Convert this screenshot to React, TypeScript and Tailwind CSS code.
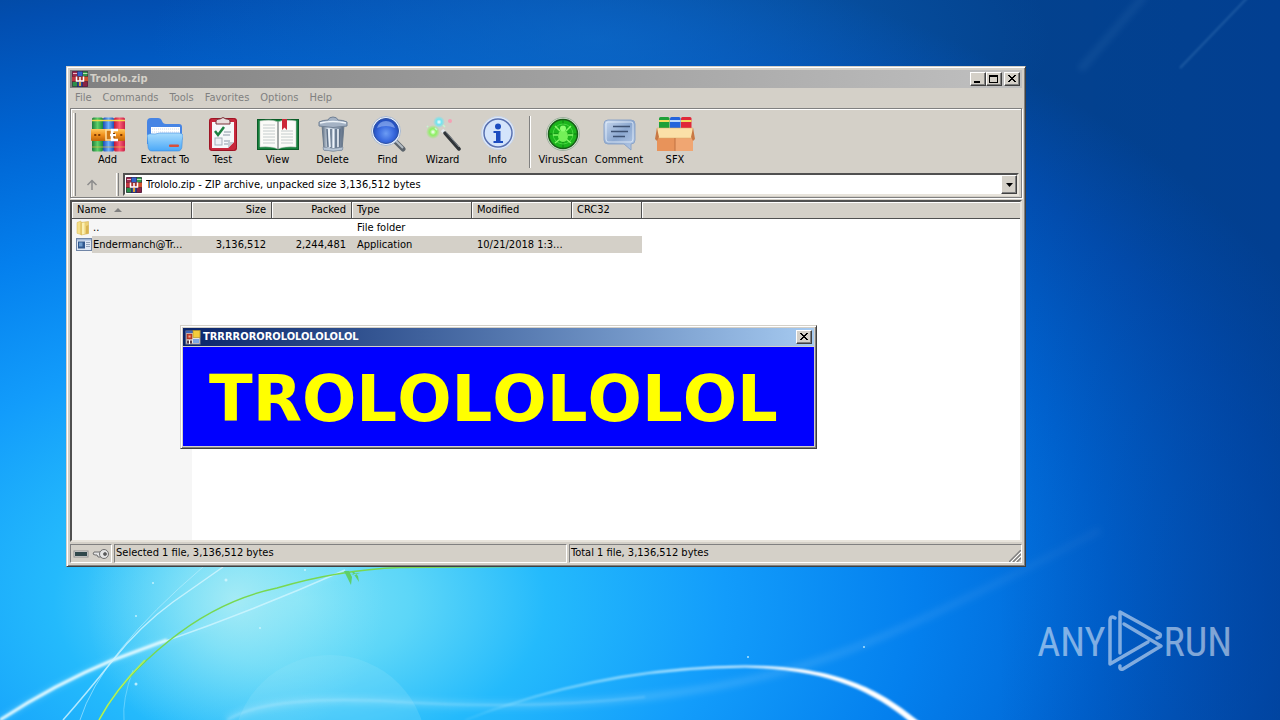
import React, { useState } from "react";

type IconProps = { className?: string };

// ---------- small icons ----------

function RarIcon({ className }: IconProps) {
  return (
    <svg viewBox="0 0 16 16" className={className} aria-hidden="true">
      <rect x="0" y="0" width="16" height="16" rx="1" fill="#3a1d3c" />
      <rect x="0.5" y="0.5" width="4.5" height="5" fill="#a02a4c" />
      <rect x="1" y="2" width="4" height="1" fill="#e9b9c6" />
      <rect x="5.5" y="0.5" width="5" height="5" fill="#2f62c8" />
      <rect x="11" y="0.5" width="4.5" height="5" fill="#2f9a4a" />
      <rect x="11" y="2" width="4.5" height="1" fill="#b8e0b0" />
      <rect x="0" y="5.5" width="16" height="5" fill="#a5322c" />
      <rect x="0" y="6" width="4" height="4" fill="#c03540" />
      <rect x="12" y="6" width="4" height="4" fill="#d0522c" />
      <rect x="0.5" y="11" width="4.5" height="4.5" fill="#2d8e4b" />
      <rect x="5.5" y="11" width="5" height="4.5" fill="#27479c" />
      <rect x="11" y="11" width="4.5" height="4.5" fill="#8a2444" />
      <path d="M4.5 5.5v4.500h7V5.500M8 6v4" fill="none" stroke="#fff" strokeWidth="1.500" />
      <rect x="7" y="11" width="2" height="4" fill="#e0a030" />
    </svg>
  );
}

function FormIcon({ className }: IconProps) {
  return (
    <svg viewBox="0 0 16 16" className={className} aria-hidden="true">
      <rect x="1" y="2" width="14" height="13" fill="#e8e4dc" stroke="#8a8a98" />
      <rect x="1" y="2" width="7" height="2" fill="#3c64b8" />
      <rect x="2" y="5" width="5" height="5" fill="#c8402c" stroke="#8c2418" strokeWidth="0.6" />
      <rect x="3.5" y="6.5" width="2" height="2" fill="#f0a890" />
      <rect x="8" y="1.5" width="7" height="7" fill="#f4cc3c" stroke="#b08a18" strokeWidth="0.6" />
      <rect x="2" y="11.5" width="5" height="3" fill="#5a3c48" />
      <rect x="4" y="11" width="1" height="4" fill="#fff" />
      <rect x="8" y="10" width="6" height="4" fill="#7ea6e4" />
    </svg>
  );
}

function FolderIcon({ className }: IconProps) {
  return (
    <svg viewBox="0 0 16 16" className={className} aria-hidden="true">
      <path d="M1 2.500 5 1v13.500l-4-1.200z" fill="#f6e08a" stroke="#d8b850" strokeWidth="0.5" />
      <path d="M5 2.500 12.500 1.500v12L5 15z" fill="#ecd076" stroke="#cfa844" strokeWidth="0.5" />
      <path d="M6 3v11.500L8.500 14V2.600z" fill="#fbf0b4" />
      <path d="m10 6 2.500-1v8.500L10 14z" fill="#d8b352" />
    </svg>
  );
}

function ExeIcon({ className }: IconProps) {
  return (
    <svg viewBox="0 0 16 16" className={className} aria-hidden="true">
      <rect x="0.5" y="1.5" width="15" height="12" fill="#dfe8f4" stroke="#7085a6" />
      <rect x="1" y="2" width="14" height="1.5" fill="#9fb6d8" />
      <rect x="2" y="4.5" width="7" height="7" fill="#31588e" />
      <rect x="3" y="5.5" width="3.5" height="4" fill="#6f9ccc" />
      <path d="M10 5.500h4M10 7.500h4M10 9.500h4" stroke="#93a2b8" />
    </svg>
  );
}

// ---------- toolbar icons ----------

function AddIcon() {
  return (
    <svg viewBox="0 0 36 36" className="size-9" aria-hidden="true">
      <defs>
        <linearGradient id="bkG"><stop stopColor="#1c7c3c" /><stop offset=".5" stopColor="#5fd068" /><stop offset="1" stopColor="#168a40" /></linearGradient>
        <linearGradient id="bkB"><stop stopColor="#1c4cb4" /><stop offset=".5" stopColor="#6cb0fa" /><stop offset="1" stopColor="#1f50b8" /></linearGradient>
        <linearGradient id="bkR"><stop stopColor="#c01838" /><stop offset=".5" stopColor="#fa5c74" /><stop offset="1" stopColor="#c82048" /></linearGradient>
        <linearGradient id="belt" x2="0" y2="1"><stop stopColor="#ffc85c" /><stop offset=".5" stopColor="#f0901c" /><stop offset="1" stopColor="#c06408" /></linearGradient>
      </defs>
      <rect x="2" y="1.500" width="11" height="34" rx="1.500" fill="url(#bkG)" />
      <rect x="13" y="1.500" width="11" height="34" rx="1.500" fill="url(#bkB)" />
      <rect x="24" y="1.500" width="11" height="34" rx="1.500" fill="url(#bkR)" />
      <path d="M2 4.500h33" stroke="#f6d84c" strokeWidth="1.500" />
      <path d="M2 31h33" stroke="#e8b83c" opacity=".7" />
      <rect x="1" y="13" width="34" height="12" rx="1" fill="url(#belt)" />
      <path d="M5 19h.5M9 19h.5M31 19h.5" stroke="#7c3a04" strokeWidth="2" strokeLinecap="round" />
      <rect x="16" y="14" width="7" height="10" fill="#d07814" stroke="#ffe0a0" strokeWidth="1.500" />
      <path d="M28 14h-6v10h6M20 19h6" fill="none" stroke="#fff" strokeWidth="2.500" />
      <path d="M24 17v1M24 20.500v1" stroke="#70380c" strokeWidth="2" />
    </svg>
  );
}

function ExtractIcon() {
  return (
    <svg viewBox="0 0 36 36" className="size-9" aria-hidden="true">
      <defs>
        <linearGradient id="fd" x2="0" y2="1"><stop stopColor="#a9dcfc" /><stop offset="1" stopColor="#4aa8f8" /></linearGradient>
      </defs>
      <path d="M0 6q0-4 4-4h7q3 0 4 3 1 3 4 3h13q3 0 3 3v17H0z" fill="#4684e4" />
      <rect x="4" y="11" width="29" height="12" fill="#fff" />
      <path d="M5 13h27M5 16h27" stroke="#ccdaf0" strokeDasharray="1 1" />
      <path d="M0 19q2-2 8-1l5-1h18q5 0 5 3-1 4-1 9 0 6-4 6H5q-4 0-4-5z" fill="url(#fd)" stroke="#3d8ce0" strokeWidth=".6" />
      <rect x="22" y="28.500" width="10" height="2.500" rx="1" fill="#d8503c" />
    </svg>
  );
}

function TestIcon() {
  return (
    <svg viewBox="0 0 36 36" className="size-9" aria-hidden="true">
      <rect x="4" y="2" width="28" height="33" rx="3" fill="#c8283c" />
      <rect x="4.500" y="2.500" width="27" height="32" rx="3" fill="none" stroke="#9c1424" />
      <path d="M7 6h22v20l-6 6H7z" fill="#f6f8fa" />
      <path d="M23 32v-6h6z" fill="#c4ccd4" />
      <path d="M11 8V5q0-2 3-2h1q3-3 6 0h1q3 0 3 2v3z" fill="#e8dcdc" stroke="#7a3038" />
      <path d="m10 15 3 4 6-8" fill="none" stroke="#1c8040" strokeWidth="2.500" />
      <path d="M19 16h7M18 19h7M19 25h6M19 28h4" stroke="#8c98a8" />
      <rect x="10" y="22" width="7" height="7" fill="#eef0f4" stroke="#a8b0bc" />
    </svg>
  );
}

function ViewIcon() {
  return (
    <svg viewBox="0 0 44 36" className="h-9 w-11" aria-hidden="true">
      <rect x="1" y="3" width="42" height="31" rx="1" fill="#16803c" />
      <rect x="1.500" y="3.500" width="41" height="30" fill="none" stroke="#0b5c28" />
      <path d="M4 5q12-2 18 1 6-3 18-1v26q-12-1-18 2-6-3-18-2z" fill="#fbfbf8" stroke="#c8ccc8" strokeWidth=".6" />
      <path d="M22 6v27" stroke="#8a9090" strokeWidth="1.500" />
      <path d="M7 9h12M7 12h12M7 15h12M7 18h12M7 21h12M7 24h12M7 27h12M25 15h12M25 18h12M25 21h12M25 24h12M25 27h12" stroke="#c4cccc" />
      <path d="M26 3h5v11l-2.500-2.500L26 14z" fill="#cc2838" />
    </svg>
  );
}

function DeleteIcon() {
  return (
    <svg viewBox="0 0 36 36" className="size-9" aria-hidden="true">
      <defs>
        <linearGradient id="can"><stop stopColor="#5c6c80" /><stop offset=".3" stopColor="#dfe8f2" /><stop offset=".6" stopColor="#9cacbe" /><stop offset="1" stopColor="#5a6a80" /></linearGradient>
      </defs>
      <path d="m7 9 2 25q9 2 18 0l2-25z" fill="url(#can)" stroke="#6a7a8c" />
      <path d="m12 13 1 18M16 13v19M21 13v19M25 13l-1 18" stroke="#5f7188" strokeWidth="1.500" />
      <path d="m14 13 1 18M18.500 13v19M23 13v18" stroke="#eef4fa" strokeWidth="1.500" />
      <path d="M4 10V6q4-2 9-2 1-3 5-3t5 3q5 0 9 2v4q-14 3-28 0z" fill="#a4b2c4" stroke="#708094" />
      <path d="M5 7q13-3 26 0" fill="none" stroke="#eff5fa" strokeWidth="1.500" />
      <path d="M8 31q10 3 20 0l-.5 3q-9 2-19 0z" fill="#b8c6d6" stroke="#708094" strokeWidth=".5" />
    </svg>
  );
}

function FindIcon() {
  return (
    <svg viewBox="0 0 36 36" className="size-9" aria-hidden="true">
      <defs>
        <radialGradient id="lens" cy=".6"><stop stopColor="#6c9cf4" /><stop offset=".6" stopColor="#3c6ce0" /><stop offset="1" stopColor="#2450c0" /></radialGradient>
      </defs>
      <path d="m25 25 8 8" stroke="#5c646c" strokeWidth="5" strokeLinecap="round" />
      <path d="m25 24 8 8" stroke="#b4bcc4" strokeWidth="2" />
      <circle cx="16" cy="15" r="14.500" fill="#e8f0fc" stroke="#a8b8d0" />
      <circle cx="16" cy="15" r="12.500" fill="url(#lens)" stroke="#2c50a4" />
      <path d="M7 12q2-7 9-7t9 7q-9-4-18 0z" fill="#8cacf0" opacity=".7" />
    </svg>
  );
}

function WizardIcon() {
  return (
    <svg viewBox="0 0 36 36" className="size-9" aria-hidden="true">
      <defs>
        <radialGradient id="glG"><stop stopColor="#fff" /><stop offset=".45" stopColor="#8cf060" /><stop offset="1" stopColor="#8cf060" stopOpacity="0" /></radialGradient>
        <radialGradient id="glC"><stop stopColor="#fff" /><stop offset=".45" stopColor="#70e4f0" /><stop offset="1" stopColor="#70e4f0" stopOpacity="0" /></radialGradient>
      </defs>
      <circle cx="8" cy="16" r="7" fill="url(#glG)" />
      <circle cx="14" cy="6" r="6" fill="url(#glC)" />
      <circle cx="25" cy="5" r="2" fill="#f4a0b4" />
      <path d="M10 12l2 2M18 9l2 2M2 10l1 1" stroke="#c4f8d0" strokeWidth="1.500" />
      <path d="m17 14 4 4" stroke="#e4e8ec" strokeWidth="3.500" />
      <path d="m20 17 14 16" stroke="#303438" strokeWidth="3.500" strokeLinecap="round" />
      <path d="m21 16 13 15" stroke="#808890" />
    </svg>
  );
}

function InfoIcon() {
  return (
    <svg viewBox="0 0 36 36" className="size-9" aria-hidden="true">
      <circle cx="18" cy="17" r="16.500" fill="#dfeafa" stroke="#c8d4e8" />
      <circle cx="18" cy="17" r="14" fill="#d4e4fb" stroke="#5870b0" strokeWidth="1.500" />
      <circle cx="18" cy="10.500" r="3" fill="#1c4cc0" />
      <path d="M13.500 15h7v10h2.500v2h-9.500v-2H16v-8h-2.500z" fill="#1c4cc0" />
    </svg>
  );
}

function VirusIcon() {
  return (
    <svg viewBox="0 0 36 36" className="size-9" aria-hidden="true">
      <circle cx="18" cy="18" r="16.500" fill="#d4e4d0" stroke="#a0b0a0" />
      <circle cx="18" cy="18" r="14.500" fill="#1cb41c" stroke="#185c18" strokeWidth="1.500" />
      <path d="M18 4v28M4 18h28" stroke="#0f8010" />
      <circle cx="18" cy="18" r="10" fill="none" stroke="#48d840" />
      <path d="m10 10 5 5M26 10l-5 5M8 19h5M28 19h-5M10 27l5-4M26 27l-5-4" stroke="#84f868" strokeWidth="1.500" />
      <ellipse cx="18" cy="20" rx="5" ry="6" fill="#74f058" />
      <circle cx="18" cy="12.500" r="3" fill="#8cfc70" />
    </svg>
  );
}

function CommentIcon() {
  return (
    <svg viewBox="0 0 36 36" className="size-9" aria-hidden="true">
      <defs>
        <linearGradient id="cm" x2="1" y2="1"><stop stopColor="#c8d8ee" /><stop offset=".5" stopColor="#8ca8d0" /><stop offset="1" stopColor="#b8cce8" /></linearGradient>
      </defs>
      <path d="M7 4h23q4 0 4 4v16q0 4-4 4v6l-7-6H7q-4 0-4-4V8q0-4 4-4z" fill="url(#cm)" stroke="#8ca4c8" />
      <path d="M7 6h23q2 0 2 2v15q0 3-2 3H7q-2 0-2-3V8q0-2 2-2z" fill="none" stroke="#eaf2fc" strokeWidth=".8" />
      <path d="M12 10.500h17M10 15.500h17M12 20.500h12" stroke="#3e5272" strokeWidth="1.500" />
    </svg>
  );
}

function SfxIcon() {
  return (
    <svg viewBox="0 0 40 36" className="h-9 w-10" aria-hidden="true">
      <rect x="4" y="1" width="10.500" height="16" rx="1.500" fill="#1ea038" />
      <rect x="15" y="1" width="10.500" height="16" rx="1.500" fill="#2464dc" />
      <rect x="26" y="1" width="10.500" height="16" rx="1.500" fill="#e02838" />
      <path d="M4 5h10.500M26 5h10.500" stroke="#f4dc60" strokeWidth="2" />
      <path d="M15 5h10.500" stroke="#bcd8fc" strokeWidth="2" />
      <path d="M2 17h36v18H2z" fill="#e8935a" />
      <path d="M20 22h18v13H20z" fill="#f0a672" />
      <path d="M2 12h36v10H2z" fill="#fbe0a8" stroke="#d8a868" strokeWidth=".5" />
      <path d="M2 12 0 23l2 2 2-4zM38 12l2 11-2 2-2-4z" fill="#c87844" />
      <path d="M20 22v13" stroke="#c07040" />
    </svg>
  );
}

// ---------- wallpaper ----------

function Wallpaper() {
  return (
    <svg
      viewBox="0 0 1280 720"
      preserveAspectRatio="xMidYMid slice"
      className="absolute inset-0 h-full w-full"
      aria-hidden="true"
    >
      <defs>
        <radialGradient id="sky" gradientUnits="userSpaceOnUse" cx="0" cy="0" r="1000" gradientTransform="translate(300 600) scale(1.12 .69)">
          <stop stopColor="#7ce2f8" />
          <stop offset=".1" stopColor="#5cd6f8" />
          <stop offset=".22" stopColor="#24bafc" />
          <stop offset=".38" stopColor="#129cfb" />
          <stop offset=".55" stopColor="#0480ee" />
          <stop offset=".72" stopColor="#0064d2" />
          <stop offset=".88" stopColor="#024eb0" />
          <stop offset="1" stopColor="#03428e" />
        </radialGradient>
        <radialGradient id="glow" gradientUnits="userSpaceOnUse" cx="235" cy="600" r="150">
          <stop stopColor="#c4f3f4" stopOpacity=".65" />
          <stop offset="1" stopColor="#8ae6f8" stopOpacity="0" />
        </radialGradient>
        <radialGradient id="top" gradientUnits="userSpaceOnUse" cx="0" cy="0" r="450" gradientTransform="translate(600 40) scale(1 .4)">
          <stop stopColor="#1070cc" stopOpacity=".6" />
          <stop offset="1" stopColor="#1070cc" stopOpacity="0" />
        </radialGradient>
        <linearGradient id="edge" gradientUnits="userSpaceOnUse" x1="1000" x2="1280">
          <stop stopColor="#003c94" stopOpacity="0" />
          <stop offset="1" stopColor="#003c94" stopOpacity=".5" />
        </linearGradient>
        <linearGradient id="beam" gradientUnits="userSpaceOnUse" x1="230" x2="1060">
          <stop stopColor="#fff" stopOpacity=".2" />
          <stop offset=".5" stopColor="#fff" stopOpacity=".16" />
          <stop offset="1" stopColor="#fff" stopOpacity=".04" />
        </linearGradient>
        <linearGradient id="arc" gradientUnits="userSpaceOnUse" x1="465" x2="800">
          <stop stopColor="#8fe0ff" stopOpacity=".6" />
          <stop offset="1" stopColor="#fff" />
        </linearGradient>
        <filter id="soft" x="-10%" y="-50%" width="120%" height="200%"><feGaussianBlur stdDeviation="1" /></filter>
        <filter id="soft3" x="-10%" y="-50%" width="120%" height="200%"><feGaussianBlur stdDeviation="3" /></filter>
      </defs>
      <rect width="1280" height="720" fill="url(#sky)" />
      <rect width="1280" height="720" fill="url(#edge)" />
      <rect width="1280" height="720" fill="url(#top)" />
      <rect width="1280" height="720" fill="url(#glow)" />
      <circle cx="330" cy="752" r="97" fill="#9ae8fa" opacity=".2" />
      <g fill="none">
        <path d="M227 720Q270 694 400 702T645 697 849 650 1100 530" stroke="url(#beam)" strokeWidth="7" filter="url(#soft3)" />
        <path d="M227 720Q270 694 400 702T645 697" stroke="url(#beam)" strokeWidth="2" filter="url(#soft)" />
        <path d="M1250 -5 1180 68" stroke="#6fa8d8" strokeWidth="2" opacity=".25" filter="url(#soft)" />
        <path d="M1145 -5 1080 70" stroke="#6fa8d8" strokeWidth="8" opacity=".1" filter="url(#soft3)" />
        <path d="M0 720Q55 684 113 660L167 640Q250 612 345 570" stroke="#9ae8ff" strokeWidth="5" opacity=".35" filter="url(#soft3)" />
        <path d="M0 720Q55 684 113 660L167 640" stroke="#e4faff" strokeWidth="3" filter="url(#soft)" />
        <path d="M160 643Q250 612 345 570" stroke="#d8f8ff" strokeWidth="1.500" opacity=".7" />
        <path d="M223 567 173 602Q140 626 113 660T63 720" stroke="#d4f6ff" strokeWidth="1.500" opacity=".8" />
        <path d="M203 567Q100 655 80 720" stroke="#c0f0ff" opacity=".6" />
        <path d="M124 720Q122 700 133 670" stroke="#a0e8ff" opacity=".5" />
        <path d="M99 720Q120 680 170 640T277 588Q338 570 400 567.500L560 566" stroke="#78d850" strokeWidth="1.500" />
        <path d="M99 720Q115 690 145 660" stroke="#b0f05c" strokeWidth="1.500" />
      </g>
      <path d="m344 571 4 8 3 6 1-8-3-6zM352 572l3 4 4 6-1-6-4-4zM351 574l9-1-5 2z" fill="#5ecf6a" />
      <path d="M465 720Q600 666 745 665.500C840 666 880 690 920 722H910C870 690 830 670 745 667.500Q600 669 465 720.500z" fill="url(#arc)" filter="url(#soft)" />
      <g fill="#d8f8ff" opacity=".8">
        <circle cx="226" cy="580" r="1.500" />
        <circle cx="136" cy="616" r="1" />
        <circle cx="136" cy="684" r="1.500" />
        <circle cx="305" cy="570" r="1" />
        <circle cx="153" cy="583" r="1" />
        <circle cx="260" cy="628" r="1" />
        <circle cx="864" cy="647" r="1" />
        <circle cx="748" cy="657" r="1" />
      </g>
    </svg>
  );
}

// ---------- window chrome ----------

const raised =
  "border border-t-white border-l-white border-r-[#404040] border-b-[#404040] bg-[#d4d0c8] shadow-[inset_-1px_-1px_#808080]";
const frame =
  "border border-t-[#d4d0c8] border-l-[#d4d0c8] border-r-[#404040] border-b-[#404040] bg-[#d4d0c8] shadow-[inset_1px_1px_#fff,inset_-1px_-1px_#808080]";
const sunken = "border border-t-[#808080] border-l-[#808080] border-r-white border-b-white";

function CaptionButton({ label, children }: { label: string; children: React.ReactNode }) {
  return (
    <button type="button" aria-label={label} className={`flex h-3.5 w-4 items-center justify-center ${raised}`}>
      <svg viewBox="0 0 12 10" className="h-2.5 w-3 shrink-0" fill="none" stroke="#000" shapeRendering="crispEdges">
        {children}
      </svg>
    </button>
  );
}

const closeGlyph = <path d="m2 1 7 7M3 1l7 7M9 1 2 8M10 1 3 8" shapeRendering="auto" />;

const menus = ["File", "Commands", "Tools", "Favorites", "Options", "Help"];

const tools = [
  { label: "Add", icon: <AddIcon />, width: "w-[55px]" },
  { label: "Extract To", icon: <ExtractIcon />, width: "w-15" },
  { label: "Test", icon: <TestIcon />, width: "w-[55px]" },
  { label: "View", icon: <ViewIcon />, width: "w-[55px]" },
  { label: "Delete", icon: <DeleteIcon />, width: "w-[55px]" },
  { label: "Find", icon: <FindIcon />, width: "w-[55px]" },
  { label: "Wizard", icon: <WizardIcon />, width: "w-[55px]" },
  { label: "Info", icon: <InfoIcon />, width: "w-[55px]" },
];

const extraTools = [
  { label: "VirusScan", icon: <VirusIcon />, width: "w-14" },
  { label: "Comment", icon: <CommentIcon />, width: "w-14" },
  { label: "SFX", icon: <SfxIcon />, width: "w-14" },
];

const columns = [
  { label: "Name", width: "w-[120px]", align: "text-left" },
  { label: "Size", width: "w-20", align: "text-right" },
  { label: "Packed", width: "w-20", align: "text-right" },
  { label: "Type", width: "w-[120px]", align: "text-left" },
  { label: "Modified", width: "w-[100px]", align: "text-left" },
  { label: "CRC32", width: "w-[70px]", align: "text-left" },
];

const rows = [
  { icon: <FolderIcon className="size-4 shrink-0" />, name: "..", size: "", packed: "", type: "File folder", modified: "" },
  {
    icon: <ExeIcon className="size-4 shrink-0" />,
    name: "Endermanch@Tr...",
    size: "3,136,512",
    packed: "2,244,481",
    type: "Application",
    modified: "10/21/2018 1:3...",
  },
];

function ToolButton({ label, icon, width }: { label: string; icon: React.ReactNode; width: string }) {
  return (
    <button type="button" className={`flex flex-col items-center ${width}`}>
      {icon}
      <span className="leading-4 whitespace-nowrap">{label}</span>
    </button>
  );
}

function Gripper() {
  return <div className="w-[3px] self-stretch border-r border-l border-r-[#808080] border-l-white" />;
}

function ArchiveWindow() {
  const [selected, setSelected] = useState(1);

  return (
    <section className={`absolute top-[66px] left-[66px] w-3/4 p-[3px] ${frame}`}>
      {/* Title bar */}
      <header className="flex h-[18px] items-center bg-linear-to-r from-[#808080] to-[#c0c0c0] pr-0.5 pl-0.5">
        <RarIcon className="size-4" />
        <h1 className="flex-1 pl-0.5 font-bold text-[#d4d0c8]">Trololo.zip</h1>
        <CaptionButton label="Minimize"><path d="M2 8h6M2 7h6" /></CaptionButton>
        <CaptionButton label="Maximize"><path d="M1 1h9M1.500 1v8M9.500 1v8M1 8.500h9M1 2h9" /></CaptionButton>
        <div className="w-0.5" />
        <CaptionButton label="Close">{closeGlyph}</CaptionButton>
      </header>

      <nav className="flex h-5 items-center gap-px text-[#808080]">
        {menus.map((m) => (
          <button key={m} type="button" className="px-[5px]">{m}</button>
        ))}
      </nav>

      {/* Toolbar and address bar share one etched band */}
      <div className="border border-[#808080] pb-px shadow-[1px_1px_#fff,inset_1px_1px_#fff]">
        <div className="flex h-16 items-stretch pt-1 pl-0.5">
          <Gripper />
          <div className="flex flex-1 pt-[3px] pl-1">
            {tools.map((t) => <ToolButton key={t.label} {...t} />)}
            <div className="mx-1 h-[52px] w-0.5 border-r border-l border-r-white border-l-[#808080]" />
            {extraTools.map((t) => <ToolButton key={t.label} {...t} />)}
          </div>
        </div>
        <div className="flex h-[23px] items-stretch pr-0.5 pl-0.5">
          <Gripper />
          <button type="button" aria-label="Up one level" className="flex w-8 items-center justify-center">
            <svg viewBox="0 0 12 12" className="size-3" fill="none" stroke="#8c8c8c" strokeWidth="1.500">
              <path d="M6 11V2M1.500 6 6 1.500 10.500 6" />
            </svg>
          </button>
          <div className="w-2" />
          <Gripper />
          <div className="w-1" />
          <div className="flex flex-1 items-center border-2 border-t-[#505050] border-r-[#e8e4dc] border-b-[#e8e4dc] border-l-[#505050] bg-white">
            <RarIcon className="ml-px size-4 shrink-0" />
            <select aria-label="Address" className="min-w-0 flex-1 appearance-none bg-white pl-1">
              <option>Trololo.zip - ZIP archive, unpacked size 3,136,512 bytes</option>
            </select>
            <span className={`pointer-events-none flex w-4 items-center justify-center self-stretch ${raised}`}>
              <svg viewBox="0 0 7 4" className="h-1 w-[7px]"><path d="M0 0h7L3.500 4z" /></svg>
            </span>
          </div>
        </div>
      </div>

      {/* File list */}
      <div className="mt-0.5 h-[342px] overflow-hidden border-2 border-t-[#505050] border-r-[#e8e4dc] border-b-[#e8e4dc] border-l-[#505050] bg-[linear-gradient(to_right,#f6f6f6_120px,#fff_120px)]">
        <table className="w-full table-fixed border-separate border-spacing-0">
          <thead>
            <tr className="h-4">
              {columns.map((c) => (
                <th
                  key={c.label}
                  className={`border-r border-b border-[#505050] bg-[#d4d0c8] px-[5px] py-0 font-normal shadow-[inset_1px_1px_#fff] ${c.width} ${c.align}`}
                >
                  {c.label}
                  {c.label === "Name" && (
                    <svg viewBox="0 0 8 4" className="ml-2 inline h-1 w-2 align-middle"><path d="M4 0 8 4H0z" fill="#808080" /></svg>
                  )}
                </th>
              ))}
              <th className="border-b border-[#505050] bg-[#d4d0c8] p-0 shadow-[inset_1px_1px_#fff]" />
            </tr>
          </thead>
          <tbody>
            {rows.map((r, i) => {
              const bg = i === selected ? "bg-[#d4d0c8]" : "";
              return (
                <tr key={r.name} className="h-[17px]" onClick={() => setSelected(i)}>
                  <td className="p-0 pl-1">
                    <div className="flex items-center">
                      {r.icon}
                      <span className={`h-[17px] flex-1 pl-px leading-[17px] whitespace-nowrap ${bg}`}>{r.name}</span>
                    </div>
                  </td>
                  <td className={`px-1.5 py-0 text-right ${bg}`}>{r.size}</td>
                  <td className={`px-1.5 py-0 text-right ${bg}`}>{r.packed}</td>
                  <td className={`px-[5px] py-0 ${bg}`}>{r.type}</td>
                  <td className={`px-[5px] py-0 whitespace-nowrap ${bg}`}>{r.modified}</td>
                  <td className={`p-0 ${bg}`} />
                  <td className="p-0" />
                </tr>
              );
            })}
          </tbody>
        </table>
      </div>

      {/* Status bar */}
      <footer className="mt-0.5 flex h-[19px] gap-0.5 leading-4">
        <div className={`flex w-[42px] items-center justify-around ${sunken}`}>
          <svg viewBox="0 0 16 10" className="h-2.5 w-4" aria-hidden="true">
            <rect x="1" y="2" width="14" height="6" fill="#e8e8e8" stroke="#909090" />
            <rect x="2" y="3" width="12" height="4" fill="#30484c" />
          </svg>
          <svg viewBox="0 0 18 12" className="h-3 w-[18px]" fill="#e4e4e4" stroke="#707070" aria-hidden="true">
            <path d="M9 4H2L1 6l2 1h2l1 2h4" />
            <circle cx="12" cy="6" r="4.500" />
            <circle cx="13" cy="6" r="1.500" fill="#505050" />
          </svg>
        </div>
        <p className={`flex-1 pl-px ${sunken}`}>Selected 1 file, 3,136,512 bytes</p>
        <div className={`flex flex-1 justify-between pl-px ${sunken}`}>
          <p>Total 1 file, 3,136,512 bytes</p>
          <svg viewBox="0 0 12 12" className="size-3 self-end" aria-hidden="true">
            <path d="M0 12 12 0M4 12l8-8M8 12l4-4" stroke="#808080" strokeWidth="1.500" />
            <path d="M2 12 12 2M6 12l6-6" stroke="#fff" />
          </svg>
        </div>
      </footer>
    </section>
  );
}

function TrololoDialog() {
  return (
    <section role="dialog" aria-label="TRRRROROROLOLOLOLOLOL" className={`absolute top-[325px] left-[180px] p-0.5 ${frame}`}>
      <header className="flex h-[18px] items-center bg-linear-to-r from-[#0a246a] to-[#a6caf0] pr-0.5 pl-0.5">
        <FormIcon className="size-4" />
        <h2 className="flex-1 pl-0.5 font-bold text-white">TRRRROROROLOLOLOLOLOL</h2>
        <CaptionButton label="Close">{closeGlyph}</CaptionButton>
      </header>
      <p className="mt-px bg-[#0000ff] pt-5 pr-9 pb-[15px] pl-[26px] font-['DejaVu_Sans','Noto_Sans',sans-serif] text-[64px] leading-[64px] font-bold text-[#ffff00] [font-kerning:none]">
        TROLOLOLOLOL
      </p>
    </section>
  );
}

function Watermark() {
  return (
    <div className="absolute right-12 bottom-[46px] flex items-center text-white/50">
      <span className="pt-1 font-['Liberation_Sans_Narrow','Roboto_Condensed','Roboto',sans-serif] text-[40px] leading-none">ANY</span>
      <svg viewBox="88 18 58 66" className="h-[66px] w-[58px]" fill="none" stroke="currentColor" strokeWidth="3.500" strokeLinejoin="round" strokeLinecap="round" aria-hidden="true">
        <path d="M97 28Q92 25 92 31V74L130 52" />
        <path d="M102 63V22L142 44Q144 47 139 48" />
        <path d="M106 34 143 56 105 79Q101 80 102 76" />
      </svg>
      <span className="pt-1 font-['Liberation_Sans_Narrow','Roboto_Condensed','Roboto',sans-serif] text-[40px] leading-none">RUN</span>
    </div>
  );
}

export default function App() {
  return (
    <main className="relative min-h-screen w-full overflow-hidden bg-[#0064d4] font-['DejaVu_Sans_Condensed','Noto_Sans',sans-serif] text-[11px] leading-4 text-black">
      <Wallpaper />
      <ArchiveWindow />
      <TrololoDialog />
      <Watermark />
    </main>
  );
}
